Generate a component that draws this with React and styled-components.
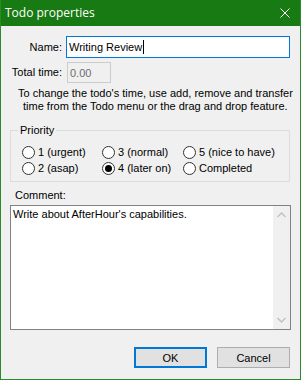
import React from "react";
import styled, { createGlobalStyle } from "styled-components";

const GlobalStyle = createGlobalStyle`
	html, body {
		margin: 0;
		padding: 0;
		background: #f0f0f0;
	}
	body {
		font-family: "Liberation Sans", Arial, sans-serif;
		font-size: 11px;
		color: #000000;
	}
`;

const Window = styled.div`
	box-sizing: border-box;
	width: 301px;
	height: 380px;
	display: flex;
	flex-direction: column;
	border: 1px solid #2a8a26;
	border-top: 0;
	background: #f0f0f0;
`;

const TitleBar = styled.div`
	height: 26px;
	flex: none;
	display: flex;
	align-items: center;
	justify-content: space-between;
	padding: 0 10px 0 4px;
	background: #177a12;
	color: #ffffff;
`;

const Title = styled.span`
	font-family: "Open Sans", "Liberation Sans", sans-serif;
	font-size: 12px;
	line-height: 16px;
	margin-top: -1px;
`;

const Body = styled.div`
	flex: 1;
	display: flex;
	flex-direction: column;
	padding: 10px 10px 11px 9px;
`;

const FormGrid = styled.div`
	display: grid;
	grid-template-columns: 52px 1fr;
	column-gap: 4px;
	row-gap: 4px;
	align-items: center;
`;

const Label = styled.label`
	display: flex;
	justify-content: flex-end;
	line-height: 13px;
	white-space: nowrap;
`;

const Field = styled.div`
	box-sizing: border-box;
	display: flex;
	align-items: center;
	height: ${(p) => (p.$disabled ? "21px" : "22px")};
	width: ${(p) => (p.$disabled ? "44px" : "auto")};
	justify-self: ${(p) => (p.$disabled ? "start" : "stretch")};
	margin-left: ${(p) => (p.$disabled ? "1px" : "0")};
	padding: 0 2px;
	border: 1px solid ${(p) => (p.$disabled ? "#cccccc" : "#0078d7")};
	background: ${(p) => (p.$disabled ? "#f0f0f0" : "#ffffff")};
	color: ${(p) => (p.$disabled ? "#6d6d6d" : "#000000")};
	white-space: nowrap;
`;

const Caret = styled.span`
	display: inline-block;
	width: 1px;
	height: 14px;
	margin-left: 1px;
	background: #000000;
`;

const Info = styled.div`
	margin-top: 4px;
	line-height: 13px;
	white-space: nowrap;
`;

const InfoLine = styled.div`
	padding-left: ${(p) => p.$indent}px;
`;

const Group = styled.fieldset`
	margin: 11px 0 0 0;
	padding: 7px 0 5px 11px;
	min-width: 0;
	border: 1px solid #dcdcdc;
`;

const Legend = styled.legend`
	margin-left: -4px;
	padding: 0 2px;
	line-height: 13px;
`;

const RadioGrid = styled.div`
	display: grid;
	grid-template-columns: 80px 81px 1fr;
	grid-auto-rows: 16px;
	align-items: center;
`;

const RadioItem = styled.div`
	display: flex;
	align-items: center;
	gap: 3px;
	white-space: nowrap;
`;

const RadioCircle = styled.span`
	box-sizing: border-box;
	width: 13px;
	height: 13px;
	flex: none;
	display: flex;
	align-items: center;
	justify-content: center;
	border: 1px solid #333333;
	border-radius: 50%;
	background: #ffffff;

	&::after {
		content: "";
		width: 7px;
		height: 7px;
		border-radius: 50%;
		background: #000000;
		display: ${(p) => (p.$checked ? "block" : "none")};
	}
`;

const CommentLabel = styled.div`
	margin-top: 7px;
	padding-left: 5px;
	line-height: 13px;
`;

const CommentBox = styled.div`
	box-sizing: border-box;
	margin-top: 3px;
	margin-right: -1px;
	height: 125px;
	display: flex;
	border: 1px solid #828282;
	background: #ffffff;
`;

const CommentText = styled.div`
	flex: 1;
	padding: 2px 2px;
	line-height: 13px;
`;

const Scrollbar = styled.div`
	width: 17px;
	flex: none;
	display: flex;
	flex-direction: column;
	justify-content: space-between;
	align-items: center;
	padding: 6px 0 6px;
	background: #f0f0f0;
`;

const Buttons = styled.div`
	margin-top: auto;
	display: flex;
	justify-content: flex-end;
	gap: 10px;
`;

const Button = styled.button`
	box-sizing: border-box;
	width: 73px;
	height: 21px;
	padding: 0;
	font: inherit;
	color: #000000;
	background: #e1e1e1;
	border: ${(p) => (p.$default ? "2px solid #0078d7" : "1px solid #adadad")};
	border-radius: 0;
`;

const radios = [
	{ label: "1 (urgent)" },
	{ label: "3 (normal)" },
	{ label: "5 (nice to have)" },
	{ label: "2 (asap)" },
	{ label: "4 (later on)", checked: true },
	{ label: "Completed" },
];

function Chevron({ up }) {
	return (
		<svg width="9" height="6" viewBox="0 0 9 6">
			<path
				d={up ? "M0.5 5 L4.5 1 L8.5 5" : "M0.5 1 L4.5 5 L8.5 1"}
				fill="none"
				stroke="#c0c0c0"
				strokeWidth="1.4"
			/>
		</svg>
	);
}

export default function App() {
	return (
		<>
			<GlobalStyle />
			<Window>
				<TitleBar>
					<Title>Todo properties</Title>
					<svg width="10" height="10" viewBox="0 0 10 10">
						<path d="M0.5 0.5 L9.5 9.5 M9.5 0.5 L0.5 9.5" stroke="#ffffff" strokeWidth="1" />
					</svg>
				</TitleBar>
				<Body>
					<FormGrid>
						<Label>Name:</Label>
						<Field>
							Writing Review
							<Caret />
						</Field>
						<Label>Total time:</Label>
						<Field $disabled>0.00</Field>
					</FormGrid>
					<Info>
						<InfoLine $indent={8}>To change the todo's time, use add, remove and transfer</InfoLine>
						<InfoLine $indent={13}>time from the Todo menu or the drag and drop feature.</InfoLine>
					</Info>
					<Group>
						<Legend>Priority</Legend>
						<RadioGrid>
							{radios.map((r) => (
								<RadioItem key={r.label}>
									<RadioCircle $checked={r.checked} />
									{r.label}
								</RadioItem>
							))}
						</RadioGrid>
					</Group>
					<CommentLabel>Comment:</CommentLabel>
					<CommentBox>
						<CommentText>Write about AfterHour's capabilities.</CommentText>
						<Scrollbar>
							<Chevron up />
							<Chevron />
						</Scrollbar>
					</CommentBox>
					<Buttons>
						<Button $default>OK</Button>
						<Button>Cancel</Button>
					</Buttons>
				</Body>
			</Window>
		</>
	);
}
